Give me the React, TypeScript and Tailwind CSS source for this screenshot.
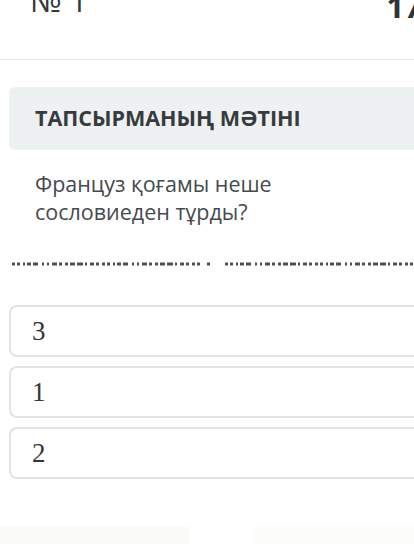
import React from 'react';

const answers = ['3', '1', '2'];

const dashPattern = '3 2 3 3 2 2 4 2 5 4 2 3 2 3 5 2 3 3 3 2 5 2 6 2 2 3 4 2 3 3';

function Dashes() {
  // broken dotted rule under the question
  return (
    <svg width="414" height="4" viewBox="0 0 414 4" className="block">
      <line x1="12" y1="2" x2="203" y2="2" stroke="#4d5153" strokeWidth="3" strokeDasharray={dashPattern} />
      <line x1="207" y1="2" x2="210" y2="2" stroke="#4d5153" strokeWidth="3" />
      <line x1="225" y1="2" x2="414" y2="2" stroke="#4d5153" strokeWidth="3" strokeDasharray={dashPattern} />
    </svg>
  );
}

export default function App() {
  return (
    <div className="w-[414px] h-[544px] overflow-hidden bg-white" style={{ fontFamily: '"Open Sans", "Noto Sans", sans-serif' }}>
      <div className="flex h-[60px] items-start border-b border-[#e4e6e6]">
        <span className="-mt-[15px] ml-[30px] text-[31px] leading-none text-[#33383b]">№ 1</span>
        <span className="-mt-[9px] -mr-[8px] ml-auto text-[31px] font-bold leading-none text-[#2f3436]">17</span>
      </div>

      <div className="ml-[9px] mt-[27px] -mr-4 flex h-[63px] items-center rounded-l-md bg-[#eef1f1] pl-[26px]">
        <span className="text-[21.5px] font-bold text-[#363b3e]">ТАПСЫРМАНЫҢ МӘТІНІ</span>
      </div>

      <p className="ml-[35px] mt-[20px] w-[320px] text-[21.5px] leading-[28px] text-[#454a4d]">
        Француз қоғамы неше сословиеден тұрды?
      </p>

      <div className="mt-[36px]">
        <Dashes />
      </div>

      <div className="ml-[9px] -mr-4 mt-[39px] flex flex-col gap-[9px]">
        {answers.map((a) => (
          <div key={a} className="flex h-[52px] items-center rounded-l-lg border-2 border-r-0 border-[#e0e4e4] pl-[21px]">
            <span className="text-[27px] leading-none text-[#333739]" style={{ fontFamily: '"Liberation Serif", "DejaVu Serif", serif' }}>{a}</span>
          </div>
        ))}
      </div>

      <div className="mt-[48px] flex gap-[65px]">
        <div className="h-[17px] w-[190px] bg-[#fafbf8]" />
        <div className="h-[17px] flex-1 bg-[#fcfcf9]" />
      </div>
    </div>
  );
}
